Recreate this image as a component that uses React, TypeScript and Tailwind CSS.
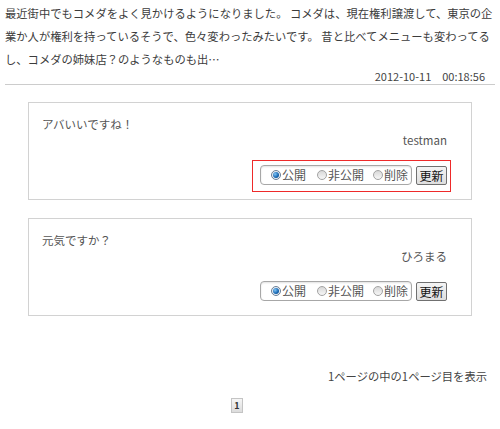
import React from 'react';

type Comment = { id: number; body: string; author: string; highlight?: boolean };

const comments: Comment[] = [
  { id: 1, body: 'アバいいですね！', author: 'testman', highlight: true },
  { id: 2, body: '元気ですか？', author: 'ひろまる' },
];

function Radio({ checked, label }: { checked?: boolean; label: string }) {
  return (
    <label className="flex items-center">
      {checked ? (
        <span className="w-[10px] h-[10px] rounded-full border border-[#6a7f96] bg-[#e9eef4] flex items-center justify-center">
          <span className="w-[6px] h-[6px] rounded-full bg-[radial-gradient(circle_at_35%_35%,#7fc4f5,#1565b0_60%,#0b3f7a)]" />
        </span>
      ) : (
        <span className="w-[10px] h-[10px] rounded-full border border-[#a3a3a3] bg-[linear-gradient(#d8d8d8,#f7f7f7)]" />
      )}
      <span className="ml-[1px] text-[12px] leading-[14px] text-[#555]">{label}</span>
    </label>
  );
}

function StatusRow({ highlight }: { highlight?: boolean }) {
  return (
    <div className="flex justify-end mr-[20px]">
      <div
        className={`flex items-center pl-[7px] pr-[3px] pt-[4px] pb-[6px] border ${
          highlight ? 'border-[#ee2a2a]' : 'border-transparent'
        }`}
      >
        <div className="flex items-center h-[20px] w-[152px] pl-[10px] rounded-[4px] border border-[#a7a7a7] bg-white shadow-[inset_0_1px_2px_rgba(0,0,0,0.12)]">
          <Radio checked label="公開" />
          <span className="w-[11px]" />
          <Radio label="非公開" />
          <span className="w-[9px]" />
          <Radio label="削除" />
        </div>
        <button className="ml-[4px] mt-[1px] w-[31px] h-[19px] rounded-[2px] border border-[#707070] bg-[linear-gradient(#f4f4f4,#dedede)] text-[12px] leading-[16px] text-[#111]">
          更新
        </button>
      </div>
    </div>
  );
}

export default function App() {
  return (
    <div className="w-[500px] h-[429px] bg-white text-[#3c3c3c] font-['Noto_Sans_CJK_JP',sans-serif] overflow-hidden">
      {/* Article excerpt */}
      <div className="px-[5px] pt-[2px] text-[11.3px] leading-[23px] whitespace-nowrap">
        最近街中でもコメダをよく見かけるようになりました。 コメダは、現在権利譲渡して、東京の企
        <br />
        業か人が権利を持っているそうで、色々変わったみたいです。 昔と比べてメニューも変わってる
        <br />
        し、コメダの姉妹店？のようなものも出…
      </div>
      <div className="mt-[-2px] pr-[15px] text-right text-[11px] leading-[14px] text-[#444]">
        2012-10-11　00:18:56
      </div>
      <div className="mx-[5px] mt-[1px] h-px bg-[#cccccc]" />

      {/* Comments */}
      <div className="flex flex-col gap-[18px] mt-[17px]">
        {comments.map(c => (
          <div key={c.id} className="ml-[28px] w-[444px] h-[98px] border border-[#d2d2d2] pt-[13px] pl-[13px]">
            <p className="text-[11.5px] leading-[16px] text-[#555]">{c.body}</p>
            <p className="pr-[24px] text-right text-[11.5px] leading-[16px] text-[#555]">{c.author}</p>
            <div className="mt-[12px] -ml-[13px]">
              <StatusRow highlight={c.highlight} />
            </div>
          </div>
        ))}
      </div>

      {/* Pagination */}
      <div className="mt-[52px] pr-[13px] text-right text-[11.3px] leading-[16px] text-[#444]">
        1ページの中の1ページ目を表示
      </div>
      <div className="mt-[14px] ml-[231px] w-[12px] h-[15px] border border-[#c4c4c4] bg-[linear-gradient(#f6f6f6,#dcdcdc)] flex items-center justify-center text-[9px] font-bold text-[#333] leading-none">
        1
      </div>
    </div>
  );
}
